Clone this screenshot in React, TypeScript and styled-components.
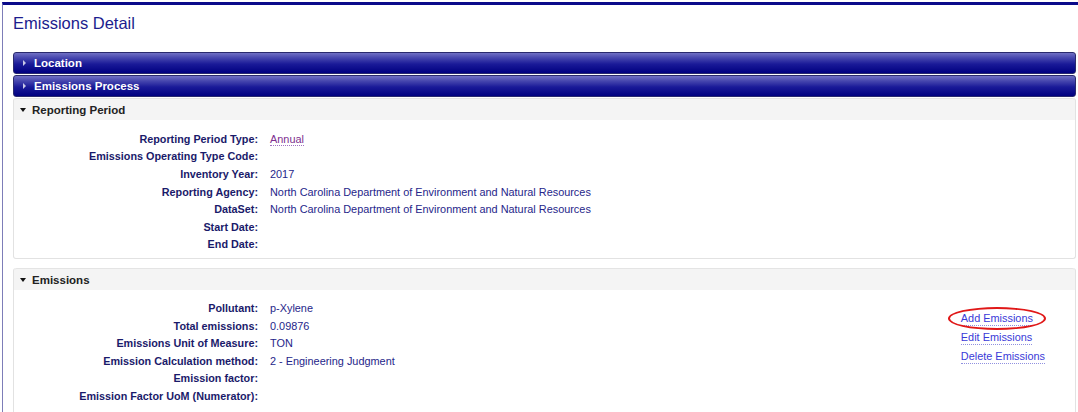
import React from "react";
import styled, { createGlobalStyle } from "styled-components";

const Global = createGlobalStyle`
  html, body { margin: 0; padding: 0; background: #fff; overflow: hidden; }
  body { font-family: "Liberation Sans", Arial, sans-serif; }
`;

const Frame = styled.div`
  margin: 2px 0 0 2px;
  border-top: 3px solid #0a0a8a;
  border-left: 1px solid #7d7db8;
  padding: 0 2px 0 10px;
  height: calc(100vh - 2px);
  box-sizing: border-box;
  overflow: hidden;
`;

const Title = styled.h1`
  margin: 0;
  padding: 9px 0 0 0;
  height: 47px;
  box-sizing: border-box;
  font-size: 16.5px;
  font-weight: normal;
  color: #1c1c8e;
`;

const Stack = styled.div`
  display: flex;
  flex-direction: column;
`;

const CollapsedHeader = styled.div`
  height: 22px;
  margin-bottom: 1px;
  box-sizing: border-box;
  display: flex;
  align-items: center;
  gap: 5px;
  padding-left: 7px;
  border: 1px solid #2a2a6e;
  border-radius: 3px;
  background: linear-gradient(to bottom, #7070c4 0%, #4646ae 25%, #1a1a98 55%, #000080 100%);
  color: #fff;
  font-weight: bold;
  font-size: 11.5px;
`;

const Panel = styled.div<{ $gapAfter?: number }>`
  display: flex;
  flex-direction: column;
  margin-bottom: ${(p) => p.$gapAfter ?? 0}px;
  border: 1px solid #e2e2e2;
  border-top: none;
  border-radius: 3px;
`;

const OpenHeader = styled.div`
  height: 22px;
  box-sizing: border-box;
  display: flex;
  align-items: center;
  gap: 6px;
  padding-left: 6px;
  background: #f4f4f4;
  border-top: 1px solid #e4e4e4;
  border-radius: 3px 3px 0 0;
  color: #222;
  font-weight: bold;
  font-size: 11.5px;
`;

const TriRight = styled.span`
  width: 0;
  height: 0;
  border-top: 3px solid transparent;
  border-bottom: 3px solid transparent;
  border-left: 3px solid #c8c8e6;
  margin-left: 2px;
  margin-right: 3px;
`;

const TriDown = styled.span`
  width: 0;
  height: 0;
  border-left: 3.5px solid transparent;
  border-right: 3.5px solid transparent;
  border-top: 4px solid #111;
`;

const Body = styled.div<{ $pt: number; $pb: number }>`
  padding: ${(p) => p.$pt}px 0 ${(p) => p.$pb}px 0;
  display: flex;
  justify-content: space-between;
  align-items: flex-start;
`;

const Fields = styled.div`
  display: grid;
  grid-template-columns: 244px auto;
  column-gap: 12px;
  grid-auto-rows: 17.6px;
  align-items: center;
  font-size: 10.9px;
`;

const Label = styled.div`
  text-align: right;
  font-weight: bold;
  font-size: 10.8px;
  color: #1a1a6a;
  white-space: nowrap;
`;

const Value = styled.div`
  color: #26268a;
  white-space: nowrap;
`;

const PurpleLink = styled.a`
  color: #7d2f8f;
  text-decoration: none;
  border-bottom: 1px dotted #a070c0;
`;

const Actions = styled.div`
  display: flex;
  flex-direction: column;
  gap: 4.8px;
  margin: 13px 30px 0 0;
  font-size: 10.9px;
`;

const ActionLink = styled.a<{ $circled?: boolean }>`
  position: relative;
  align-self: flex-start;
  color: #3a3ad8;
  text-decoration: none;
  border-bottom: 1px dotted #9090e0;
  line-height: 13px;
  ${(p) =>
    p.$circled &&
    `
    &::after {
      content: "";
      position: absolute;
      left: -13px;
      right: -13px;
      top: -5px;
      bottom: -5px;
      border: 2px solid #e01818;
      border-radius: 50%;
    }
  `}
`;

type Row = { label: string; value?: React.ReactNode };

const reporting: Row[] = [
  { label: "Reporting Period Type:", value: <PurpleLink href="#">Annual</PurpleLink> },
  { label: "Emissions Operating Type Code:" },
  { label: "Inventory Year:", value: "2017" },
  { label: "Reporting Agency:", value: "North Carolina Department of Environment and Natural Resources" },
  { label: "DataSet:", value: "North Carolina Department of Environment and Natural Resources" },
  { label: "Start Date:" },
  { label: "End Date:" },
];

const emissions: Row[] = [
  { label: "Pollutant:", value: "p-Xylene" },
  { label: "Total emissions:", value: "0.09876" },
  { label: "Emissions Unit of Measure:", value: "TON" },
  { label: "Emission Calculation method:", value: "2 - Engineering Judgment" },
  { label: "Emission factor:" },
  { label: "Emission Factor UoM (Numerator):" },
];

const FieldList = ({ rows }: { rows: Row[] }) => (
  <Fields>
    {rows.map((r) => (
      <React.Fragment key={r.label}>
        <Label>{r.label}</Label>
        <Value>{r.value ?? ""}</Value>
      </React.Fragment>
    ))}
  </Fields>
);

export default function App() {
  return (
    <>
      <Global />
      <Frame>
        <Title>Emissions Detail</Title>
        <Stack>
          <CollapsedHeader>
            <TriRight />
            Location
          </CollapsedHeader>
          <CollapsedHeader>
            <TriRight />
            Emissions Process
          </CollapsedHeader>
          <Panel $gapAfter={9}>
            <OpenHeader>
              <TriDown />
              Reporting Period
            </OpenHeader>
            <Body $pt={10} $pb={5}>
              <FieldList rows={reporting} />
            </Body>
          </Panel>
          <Panel>
            <OpenHeader>
              <TriDown />
              Emissions
            </OpenHeader>
            <Body $pt={9} $pb={20}>
              <FieldList rows={emissions} />
              <Actions>
                <ActionLink href="#" $circled>Add Emissions</ActionLink>
                <ActionLink href="#">Edit Emissions</ActionLink>
                <ActionLink href="#">Delete Emissions</ActionLink>
              </Actions>
            </Body>
          </Panel>
        </Stack>
      </Frame>
    </>
  );
}
